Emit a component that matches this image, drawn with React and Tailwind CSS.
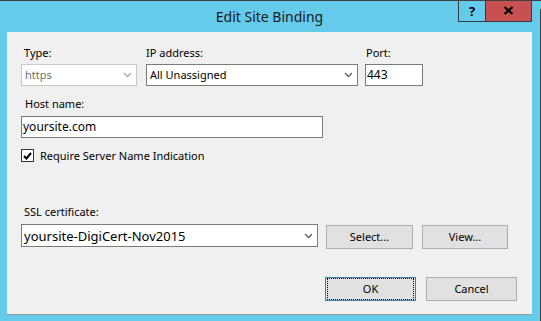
import React from "react";

const font = { fontFamily: '"Noto Sans", "Open Sans", sans-serif' };

function Chevron({ color = "#606060" }) {
  return (
    <svg width="9" height="6" viewBox="0 0 9 6" className="shrink-0">
      <path d="M1 1 L4.5 4.5 L8 1" fill="none" stroke={color} strokeWidth="1.4" />
    </svg>
  );
}

function Button({ children, focused, className = "" }) {
  return (
    <div
      className={`h-[24px] flex items-center justify-center bg-[#e1e1e1] border ${
        focused ? "border-[#3c7fb1]" : "border-[#adadad]"
      } ${className}`}
    >
      <div
        className={`w-full h-full flex items-center justify-center ${
          focused ? "m-[1px] border border-dotted border-black" : ""
        }`}
      >
        {children}
      </div>
    </div>
  );
}

export default function App() {
  return (
    <div
      className="w-[541px] h-[321px] bg-[#65cbea] border-t border-[#404040] overflow-hidden text-[11px] leading-[16px] text-black"
      style={font}
    >
      <div className="flex h-full">
        <div className="flex flex-col w-[540px] pl-[7px] pr-[8px]">
          {/* Title bar */}
          <div className="grid h-[31px]">
            <div className="col-start-1 row-start-1 flex items-start justify-center pt-[6px] text-[14px] leading-[20px] text-[#1a1a1a]">
              Edit Site Binding
            </div>
            <div className="col-start-1 row-start-1 justify-self-end flex items-start">
              <div className="flex h-[22px] border border-t-0 border-[#3a3a3a] mt-[-1px]">
                <div className="w-[27px] flex items-center justify-center text-[13px] font-bold text-black border-r border-[#3a3a3a]">
                  ?
                </div>
                <div className="w-[45px] flex items-center justify-center bg-[#c75050]">
                  <svg width="11" height="9" viewBox="0 0 11 9">
                    <path d="M1.5 1 L9.5 8 M9.5 1 L1.5 8" stroke="#000" strokeWidth="2.2" />
                  </svg>
                </div>
              </div>
            </div>
          </div>

          {/* Client area */}
          <div className="h-[283px] bg-[#f0f0f0] border-b border-[#9a9a9a] pt-[13px] pl-[14px] pr-[15px] flex flex-col">
            {/* Row 1 */}
            <div className="flex">
              <div className="flex flex-col w-[116px]">
                <div className="pl-[3px]">Type:</div>
                <div className="mt-[3px] h-[22px] bg-white border border-[#c8c8c8] flex items-center justify-between pl-[3px] pr-[4px] text-[#707070]">
                  <span>https</span>
                  <Chevron color="#a8a8a8" />
                </div>
              </div>
              <div className="flex flex-col w-[212px] ml-[9px]">
                <div>IP address:</div>
                <div className="mt-[3px] h-[22px] bg-white border border-[#7a7a7a] flex items-center justify-between pl-[3px] pr-[4px]">
                  <span>All Unassigned</span>
                  <Chevron />
                </div>
              </div>
              <div className="flex flex-col w-[58px] ml-[7px]">
                <div className="pl-[1px]">Port:</div>
                <div className="mt-[3px] h-[22px] bg-white border border-[#7a7a7a] flex items-center pl-[1px] text-[12px]">
                  443
                </div>
              </div>
            </div>

            {/* Host name */}
            <div className="mt-[10px] pl-[4px]">Host name:</div>
            <div className="mt-[4px] w-[302px] h-[22px] bg-white border border-[#7a7a7a] flex items-center pl-[1px] text-[12px]">
              yoursite.com
            </div>

            {/* Checkbox */}
            <div className="mt-[11px] flex items-center h-[13px]">
              <div className="w-[13px] h-[13px] bg-white border border-[#333] flex items-center justify-center">
                <svg width="9" height="8" viewBox="0 0 9 8">
                  <path d="M1 4 L3.5 6.5 L8 1" fill="none" stroke="#000" strokeWidth="2" />
                </svg>
              </div>
              <span className="ml-[6px]">Require Server Name Indication</span>
            </div>

            {/* SSL */}
            <div className="mt-[42px] pl-[3px]">SSL certificate:</div>
            <div className="mt-[4px] flex items-start">
              <div className="w-[297px] h-[23px] bg-white border border-[#7a7a7a] flex items-center justify-between pl-[2px] pr-[4px] text-[13px]">
                <span>yoursite-DigiCert-Nov2015</span>
                <Chevron />
              </div>
              <Button className="w-[87px] ml-[8px] mt-[1px]">Select...</Button>
              <Button className="w-[86px] ml-[9px] mt-[1px]">View...</Button>
            </div>

            {/* OK / Cancel */}
            <div className="mt-[28px] flex justify-end">
              <Button focused className="w-[91px]">OK</Button>
              <Button className="w-[91px] ml-[10px]">Cancel</Button>
            </div>
          </div>
        </div>
        <div className="w-px h-full flex flex-col">
          <div className="h-[8px]" />
          <div className="flex-1 bg-[#404040]" />
        </div>
      </div>
    </div>
  );
}
